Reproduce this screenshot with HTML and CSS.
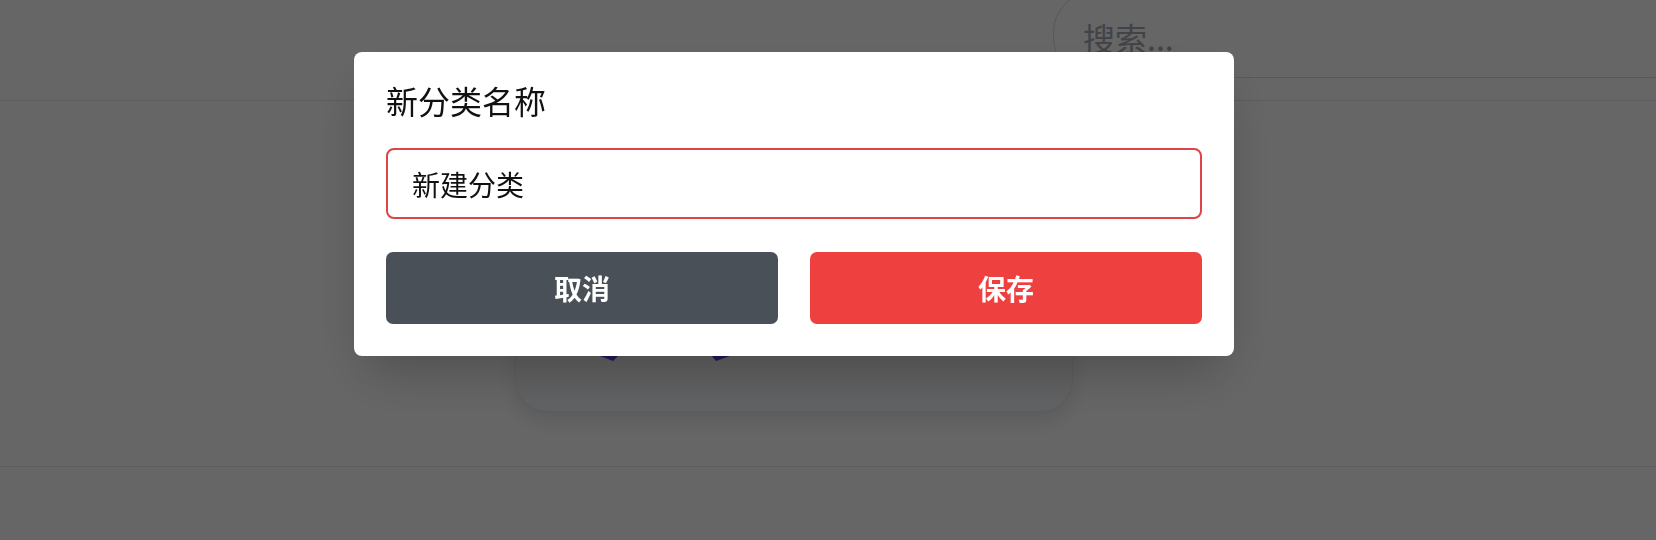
FILE: index.html
```html
<!DOCTYPE html>
<html lang="zh-CN">
<head>
<meta charset="utf-8">
<title>新分类名称</title>
<link rel="stylesheet" href="styles.css">
</head>
<body>
<div class="page">
  <header class="topbar">
    <div class="search">搜索...</div>
  </header>
  <main class="main">
    <div class="card">
      <svg class="card-art" viewBox="0 0 556 280" preserveAspectRatio="none">
        <polygon points="97,230 58,215 107,220" fill="#4a46d8"/>
        <polygon points="200,230 191,219.5 242,215" fill="#4a46d8"/>
      </svg>
    </div>
  </main>
  <footer class="footer"></footer>
</div>
<div class="overlay">
  <div class="modal">
    <h2 class="modal-title">新分类名称</h2>
    <input class="modal-input" type="text" value="新建分类">
    <div class="modal-actions">
      <button class="btn btn-cancel">取消</button>
      <button class="btn btn-save">保存</button>
    </div>
  </div>
</div>
</body>
</html>
```
FILE: styles.css
```css
* { box-sizing: border-box; }
html, body {
  margin: 0;
  padding: 0;
  height: 100%;
  overflow: hidden;
  font-family: "Noto Sans CJK SC", "Noto Sans", sans-serif;
  background: #ffffff;
}
.page {
  height: 540px;
  display: flex;
  flex-direction: column;
}
.topbar {
  height: 101px;
  flex: none;
  border-bottom: 1px solid #e5e7eb;
  display: flex;
  justify-content: flex-end;
  overflow: hidden;
}
.search {
  flex: none;
  width: 640px;
  height: 86px;
  margin-top: -8px;
  margin-right: -37px;
  border: 1px solid #d8dbe0;
  border-radius: 40px;
  padding: 24px 0 0 29px;
  font-size: 32px;
  line-height: 40px;
  color: #a2a7b0;
}
.main {
  flex: none;
  height: 365px;
  display: flex;
  justify-content: center;
  align-items: flex-start;
  padding: 29px 68px 0 0;
}
.card {
  width: 558px;
  height: 282px;
  background: #f3f4f6;
  border: 1px solid #e5e7eb;
  border-radius: 32px;
  box-shadow: 0 10px 20px rgba(0, 0, 0, 0.1);
}
.card-art {
  display: block;
  width: 100%;
  height: 100%;
}
.footer {
  flex: 1;
  border-top: 1px solid #e5e7eb;
}
.overlay {
  position: fixed;
  inset: 0;
  background: rgba(0, 0, 0, 0.6);
  display: flex;
  justify-content: center;
  align-items: flex-start;
  padding: 52px 68px 0 0;
}
.modal {
  width: 880px;
  background: #ffffff;
  border-radius: 8px;
  padding: 28px 32px 32px;
  box-shadow: 0 25px 50px -12px rgba(0, 0, 0, 0.25);
}
.modal-title {
  margin: 0 0 28px;
  font-size: 32px;
  line-height: 40px;
  font-weight: 400;
  color: #111111;
}
.modal-input {
  display: block;
  width: 100%;
  height: 71px;
  border: 2px solid #dc4446;
  border-radius: 8px;
  padding: 0 24px;
  font-family: inherit;
  font-size: 28px;
  color: #111111;
  outline: none;
  background: #ffffff;
}
.modal-actions {
  margin-top: 33px;
  display: grid;
  grid-template-columns: 1fr 1fr;
  gap: 32px;
}
.btn {
  height: 72px;
  border: none;
  border-radius: 7px;
  font-family: inherit;
  font-size: 28px;
  font-weight: 700;
  color: #ffffff;
  padding: 0;
}
.btn-cancel { background: #495057; }
.btn-save { background: #ef4040; }
```
